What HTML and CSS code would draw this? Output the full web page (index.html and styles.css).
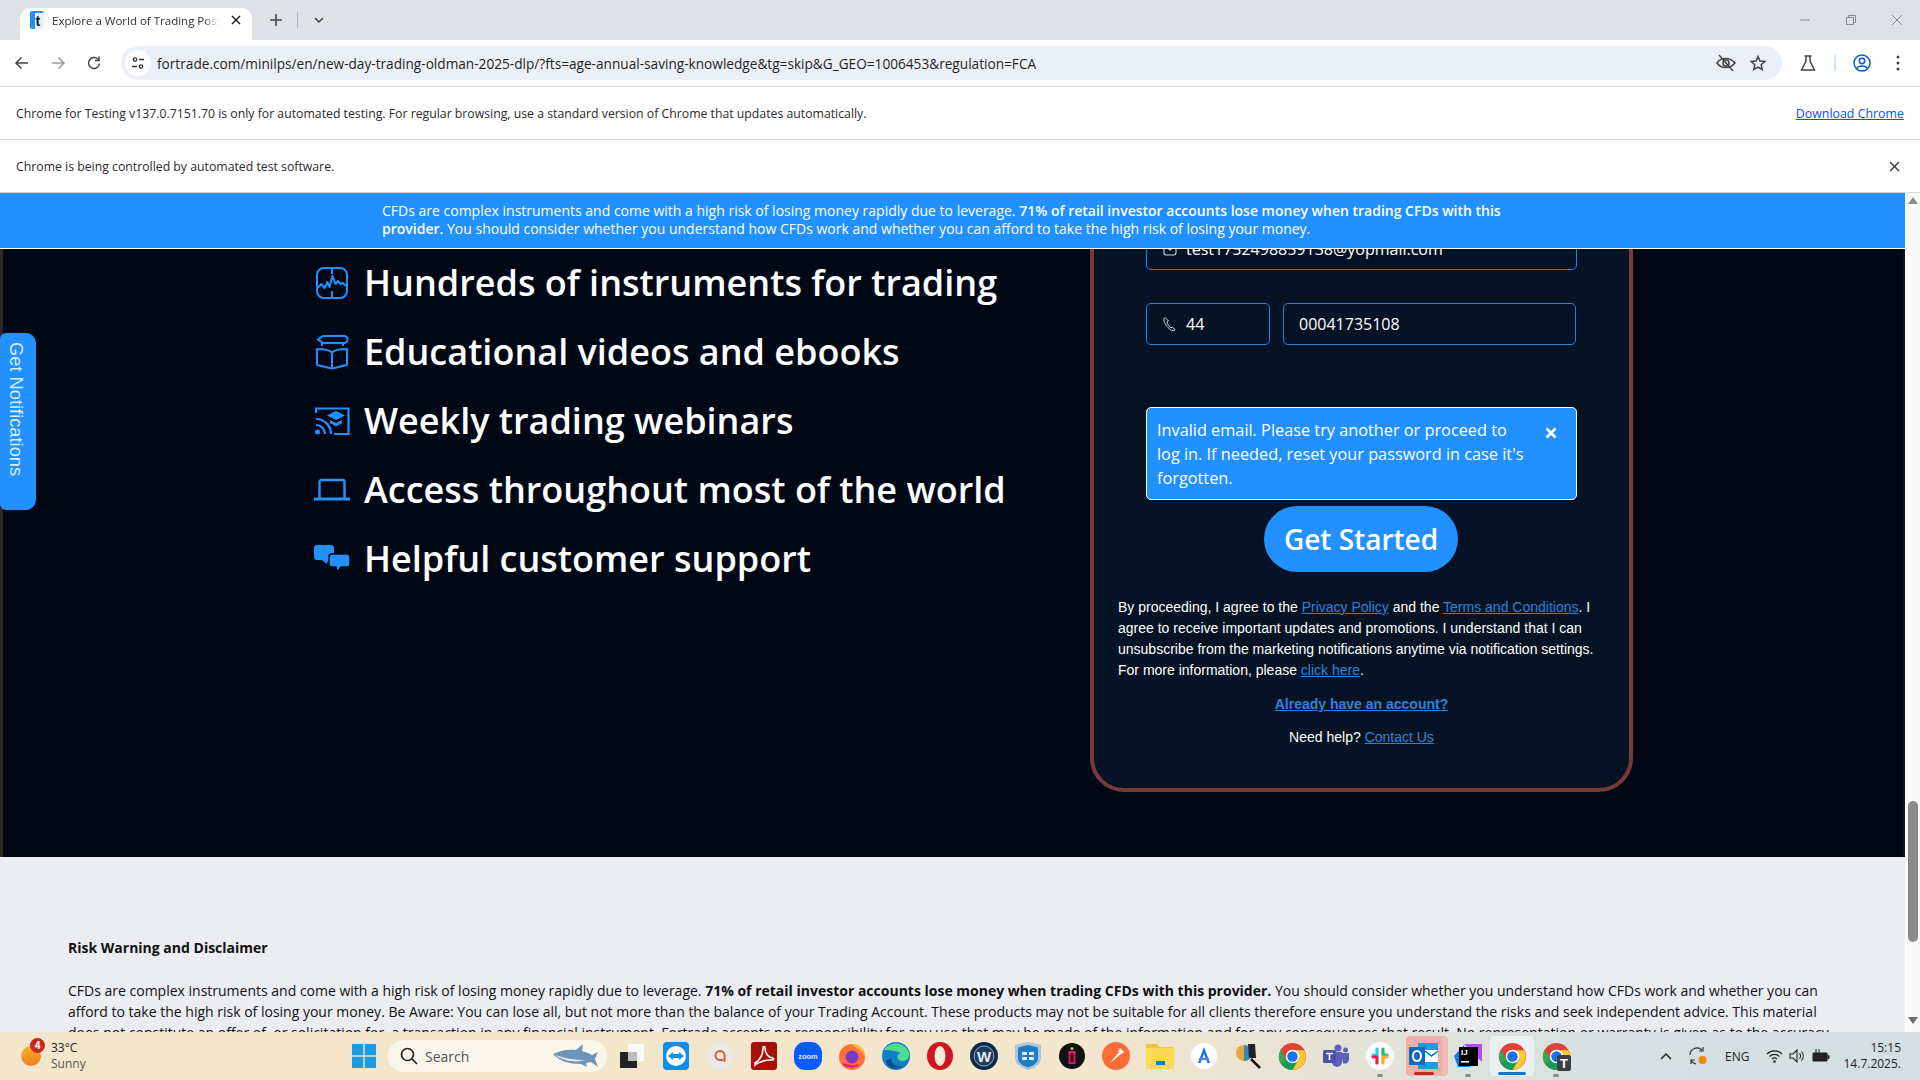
FILE: index.html
```html
<!DOCTYPE html>
<html lang="en">
<head>
  <meta charset="UTF-8">
  <title>Explore a World of Trading Possibilities</title>
  <link rel="stylesheet" href="styles.css">
</head>
<body>
  <svg class="defs" width="0" height="0">
    <symbol id="chrome" viewBox="0 0 32 32">
      <circle cx="16" cy="16" r="15" fill="#db4437"/>
      <path d="M16 16 3 23.5A15 15 0 0 0 16 31l7-7.5z" fill="#0f9d58"/>
      <path d="M16 9h13a15 15 0 0 1-13 22l7.500-13z" fill="#fcc934"/>
      <path d="M16 16 3 23.500A15 15 0 0 1 3 8.500L9.500 20z" fill="#34a853"/>
      <circle cx="16" cy="16" r="7.500" fill="#fff"/>
      <circle cx="16" cy="16" r="5.800" fill="#1a73e8"/>
    </symbol>
  </svg>

  <div class="tabstrip">
    <div class="tab">
      <svg class="favicon" width="14" height="18" viewBox="0 0 14 18"><rect width="14" height="18" rx="2" fill="#2291ff"/><rect x="5" y="2" width="9" height="16" fill="#e8f2ff"/><text x="5.500" y="15" class="favicon-t">t</text></svg>
      <span class="tab-title">Explore a World of Trading Possibilities</span>
      <svg class="tab-close" width="10" height="10" viewBox="0 0 10 10"><path d="M1 1l8 8M9 1L1 9" stroke="#222" stroke-width="1.500"/></svg>
    </div>
    <svg class="new-tab" width="12" height="12" viewBox="0 0 12 12"><path d="M6 0v12M0 6h12" stroke="#444" stroke-width="1.500"/></svg>
    <span class="strip-sep"></span>
    <svg class="tab-search" width="10" height="6" viewBox="0 0 10 6"><path d="M1 1l4 4 4-4" fill="none" stroke="#444" stroke-width="1.500"/></svg>
    <div class="window-btns">
      <svg width="12" height="12" viewBox="0 0 12 12"><path d="M1 6h10" stroke="#a3a6ab" stroke-width="1.500"/></svg>
      <svg width="12" height="12" viewBox="0 0 12 12"><path d="M1.500 3.500h7v7h-7zM3.500 3V1.500h7v7H9" fill="none" stroke="#85888c"/></svg>
      <svg width="12" height="12" viewBox="0 0 12 12"><path d="M1 1l10 10M11 1L1 11" stroke="#85888c"/></svg>
    </div>
  </div>

  <div class="toolbar">
    <svg class="nav-icon" width="16" height="16" viewBox="0 0 16 16"><path d="M14 8H2M7.500 2.500 2 8l5.500 5.500" fill="none" stroke="#444" stroke-width="1.500"/></svg>
    <svg class="nav-icon" width="16" height="16" viewBox="0 0 16 16"><path d="M2 8h12M8.500 2.500 14 8l-5.500 5.500" fill="none" stroke="#9a9a9a" stroke-width="1.500"/></svg>
    <svg class="nav-icon" width="16" height="16" viewBox="0 0 16 16"><path d="M13.500 8.500A5.500 5.500 0 1 1 12 4.200M13 1.500v4h-4" fill="none" stroke="#444" stroke-width="1.500"/></svg>
    <div class="omnibox">
      <span class="site-chip">
        <svg width="14" height="14" viewBox="0 0 14 14"><g fill="none" stroke="#333" stroke-width="1.300"><circle cx="4" cy="3.500" r="1.700"/><path d="M8 3.500h5M1 10.500h5"/><circle cx="10" cy="10.500" r="1.700"/></g></svg>
      </span>
      <span class="url">fortrade.com/minilps/en/new-day-trading-oldman-2025-dlp/?fts=age-annual-saving-knowledge&amp;tg=skip&amp;G_GEO=1006453&amp;regulation=FCA</span>
      <svg class="omni-eye" width="20" height="18" viewBox="0 0 20 18"><g fill="none" stroke="#444" stroke-width="1.500"><path d="M1 9c4-6 13-6 18 0-5 6-14 6-18 0z"/><circle cx="10" cy="9" r="3"/><path d="M3 1l14 16"/></g></svg>
      <svg class="omni-star" width="16" height="16" viewBox="0 0 16 16"><path d="M8 1.500l2 4.500 4.800.5-3.600 3.200 1 4.800L8 12.100l-4.200 2.400 1-4.800L1.200 6.500 6 6z" fill="none" stroke="#444" stroke-width="1.500"/></svg>
    </div>
    <svg class="tool-flask" width="16" height="16" viewBox="0 0 16 16"><path d="M4.500 1h7M6 1v5L1.500 15h13L10 6V1" fill="none" stroke="#444" stroke-width="1.500"/></svg>
    <span class="tool-sep"></span>
    <svg class="tool-profile" width="18" height="18" viewBox="0 0 18 18"><g fill="none" stroke="#0b57d0" stroke-width="1.500"><circle cx="9" cy="9" r="8"/><circle cx="9" cy="7" r="2.700"/><path d="M3.500 14.500c2-3.500 9-3.500 11 0"/></g></svg>
    <svg class="tool-menu" width="4" height="16" viewBox="0 0 4 16"><g fill="#444"><circle cx="2" cy="2" r="1.500"/><circle cx="2" cy="8" r="1.500"/><circle cx="2" cy="14" r="1.500"/></g></svg>
  </div>

  <div class="infobar">
    <span>Chrome for Testing v137.0.7151.70 is only for automated testing. For regular browsing, use a standard version of Chrome that updates automatically.</span>
    <a class="infobar-link" href="#">Download Chrome</a>
  </div>
  <div class="infobar">
    <span>Chrome is being controlled by automated test software.</span>
    <svg width="11" height="11" viewBox="0 0 11 11"><path d="M1 1l9 9M10 1l-9 9" stroke="#333" stroke-width="1.400"/></svg>
  </div>

  <div class="viewport">
    <div class="page">
      <div class="risk-banner">
        <p>CFDs are complex instruments and come with a high risk of losing money rapidly due to leverage. <b>71% of retail investor accounts lose money when trading CFDs with this provider.</b> You should consider whether you understand how CFDs work and whether you can afford to take the high risk of losing your money.</p>
      </div>

      <div class="page-scroll">
        <section class="hero">
          <a class="notify-tab" href="#">Get Notifications</a>
          <ul class="features">
            <li>
              <svg class="feature-icon" viewBox="0 0 36 36"><g fill="none" stroke="#2291ff" stroke-width="2"><rect x="3" y="3" width="30" height="30" rx="7"/><path d="M18 3v6M18 26v7"/><path d="M3.500 23l4-4 3 4 3-6 2 5 3-11 3 8 2.500-3 2.500 3 2.500-1 3 3" stroke-linejoin="round"/></g></svg>
              Hundreds of instruments for trading
            </li>
            <li>
              <svg class="feature-icon" viewBox="0 0 36 36"><g fill="none" stroke="#2291ff" stroke-width="2"><path d="M4 5.500 9 2h21a3.500 3.500 0 0 1 0 7H9zM8 9v3M29 9v3"/><path d="M3 15c6 0 12 .5 15 3.500 3-3 9-3.500 15-3.500v16l-15 3.500L3 31zM18 18.500v16" stroke-linejoin="round"/></g></svg>
              Educational videos and ebooks
            </li>
            <li>
              <svg class="feature-icon feature-icon-wide" viewBox="0 0 36 30"><g fill="none" stroke="#2291ff" stroke-width="2.200"><path d="M2 7V2.500h32.500V28H20"/><path d="M2 13a15 15 0 0 1 15 15M2 19a9 9 0 0 1 9 9"/></g><circle cx="3.500" cy="26" r="2.500" fill="#2291ff"/><path d="M22 5l9 4.500-9 4.500-9-4.500z" fill="#2291ff"/><path d="M16 14v3l6 3.500 6-3.500v-3l-6 3z" fill="#2291ff"/></svg>
              Weekly trading webinars
            </li>
            <li>
              <svg class="feature-icon feature-icon-wide" viewBox="0 0 36 30"><path d="M5.500 23V7a2 2 0 0 1 2-2h21a2 2 0 0 1 2 2v16" fill="none" stroke="#2291ff" stroke-width="2.400"/><rect y="22.500" width="36" height="3" fill="#2291ff"/></svg>
              Access throughout most of the world
            </li>
            <li>
              <svg class="feature-icon feature-icon-wide" viewBox="0 0 36 30"><path d="M3 1h14a3 3 0 0 1 3 3v9a3 3 0 0 1-3 3h-3l-1 4-5-4H3a3 3 0 0 1-3-3V4a3 3 0 0 1 3-3z" fill="#2291ff"/><path d="M18 10h15a3 3 0 0 1 3 3v7a3 3 0 0 1-3 3h-6l-4 5-1-5h-4a3 3 0 0 1-3-3v-7a3 3 0 0 1 3-3z" fill="#2291ff" stroke="#000816" stroke-width="1.500"/></svg>
              Helpful customer support
            </li>
          </ul>

          <div class="form-card">
            <div class="form-fields">
              <div class="field">
                <svg class="field-icon" width="16" height="16" viewBox="0 0 16 16"><g fill="none" stroke="#cfd3d8" stroke-width="1.100"><rect x="2" y="3" width="12" height="11" rx="2.500"/><path d="M2.500 5L8 9l5.500-4"/></g></svg>
                <span>test1752498859138@yopmail.com</span>
              </div>
              <div class="phone-row">
                <div class="field field-code">
                  <svg class="field-icon" width="16" height="16" viewBox="0 0 16 16"><path d="M3 1.500C1 3 2 7 5 10.500s6 5 8 3.500l-2.500-3-1.500.8C7.500 11 5 8 5 6l1.500-1z" fill="none" stroke="#cfd3d8"/></svg>
                  <span>44</span>
                </div>
                <div class="field field-phone">
                  <span>00041735108</span>
                </div>
              </div>
            </div>

            <div class="form-alert">
              <span class="alert-text">Invalid email. Please try another or proceed to log in. If needed, reset your password in case it's forgotten.</span>
              <svg class="alert-close" width="12" height="12" viewBox="0 0 12 12"><path d="M1.500 1.500l9 9M10.500 1.500l-9 9" stroke="#fff" stroke-width="2.600"/></svg>
            </div>

            <button class="get-started">Get Started</button>

            <p class="legal">By proceeding, I agree to the <a href="#">Privacy Policy</a> and the <a href="#">Terms and Conditions</a>. I agree to receive important updates and promotions. I understand that I can unsubscribe from the marketing notifications anytime via notification settings. For more information, please <a href="#">click here</a>.</p>
            <p class="login-line"><a href="#">Already have an account?</a></p>
            <p class="help-line">Need help? <a href="#">Contact Us</a></p>
          </div>
        </section>

        <section class="disclaimer">
          <h4>Risk Warning and Disclaimer</h4>
          <p>CFDs are complex instruments and come with a high risk of losing money rapidly due to leverage. <b>71% of retail investor accounts lose money when trading CFDs with this provider.</b> You should consider whether you understand how CFDs work and whether you can afford to take the high risk of losing your money. Be Aware: You can lose all, but not more than the balance of your Trading Account. These products may not be suitable for all clients therefore ensure you understand the risks and seek independent advice. This material does not constitute an offer of, or solicitation for, a transaction in any financial instrument. Fortrade accepts no responsibility for any use that may be made of the information and for any consequences that result. No representation or warranty is given as to the accuracy</p>
        </section>
      </div>
    </div>

    <div class="scrollbar">
      <svg width="10" height="7" viewBox="0 0 10 7"><path d="M5 0l5 7H0z" fill="#8c8c8c"/></svg>
      <span class="scroll-thumb"></span>
      <svg width="10" height="7" viewBox="0 0 10 7"><path d="M5 7l5-7H0z" fill="#6d6d6d"/></svg>
    </div>
  </div>

  <footer class="taskbar">
    <div class="weather">
      <span class="weather-sun"><span class="weather-badge">4</span></span>
      <div class="weather-text"><span>33°C</span><span class="weather-sub">Sunny</span></div>
    </div>
    <div class="task-btn">
      <svg width="24" height="24" viewBox="0 0 24 24"><g fill="#1c9be6"><rect width="11.300" height="11.300"/><rect x="12.700" width="11.300" height="11.300"/><rect y="12.700" width="11.300" height="11.300"/><rect x="12.700" y="12.700" width="11.300" height="11.300"/></g></svg>
    </div>
    <div class="task-search">
      <svg width="18" height="18" viewBox="0 0 18 18"><g fill="none" stroke="#222" stroke-width="1.700"><circle cx="7.500" cy="7.500" r="6"/><path d="M12 12l5 5"/></g></svg>
      <span>Search</span>
      <svg class="search-shark" width="46" height="26" viewBox="0 0 46 26"><path d="M0 11c8-4 16-5 23-4l7-6-1 7c4 1 8 3 10 4l6-3-3 7 3 8-7-5-5 1 1 4-6-3C16 21 6 18 0 11z" fill="#6d95b5"/><path d="M2 12c8 3 20 5 30 5-8 3-22 1-30-5z" fill="#e8eef2"/></svg>
    </div>
    <div class="task-btn">
      <svg width="26" height="26" viewBox="0 0 26 26"><rect x="9" y="1" width="16" height="17" fill="#fbfbfb"/><rect x="1" y="9" width="17" height="16" fill="#222"/><rect x="9" y="9" width="9" height="9" fill="#bdbdbd"/></svg>
    </div>
    <div class="task-btn">
      <svg width="26" height="28" viewBox="0 0 26 28"><rect width="26" height="28" rx="4" fill="#0e8ee9"/><circle cx="13" cy="14" r="10" fill="#fff"/><path d="M5 14l5-4v2h6v-2l5 4-5 4v-2h-6v2z" fill="#0e8ee9"/></svg>
    </div>
    <div class="task-btn">
      <svg width="28" height="28" viewBox="0 0 28 28"><circle cx="14" cy="14" r="14" fill="#ece8e2"/><path d="M18.500 20v-7a4.500 4.500 0 1 0-4.500 5h3" fill="none" stroke="#e05a44" stroke-width="2"/></svg>
    </div>
    <div class="task-btn">
      <svg width="26" height="28" viewBox="0 0 26 28"><rect width="26" height="28" rx="3" fill="#a80f07"/><path d="M4 21c5-3 8-9 8-15 0-2 2-2 2 0 0 6 4 10 8 10 1 0 1 2-1 2-6 0-12 1-17 5z" fill="none" stroke="#fff" stroke-width="1.600"/></svg>
    </div>
    <div class="task-btn">
      <svg width="28" height="28" viewBox="0 0 28 28"><rect width="28" height="28" rx="11" fill="#0b5cff"/><text x="14" y="16.500" class="zoom-label">zoom</text></svg>
    </div>
    <div class="task-btn">
      <svg width="28" height="28" viewBox="0 0 28 28"><circle cx="14" cy="15" r="13" fill="#ff7139"/><path d="M14 2c8 0 13 6 13 13-2-5-5-8-9-9z" fill="#ffbd2e"/><circle cx="14" cy="15" r="6.500" fill="#7b3ac2"/><path d="M4 21c3 5 13 7 18 1-5 2-12 1-18-1z" fill="#e31587"/></svg>
    </div>
    <div class="task-btn">
      <svg width="28" height="28" viewBox="0 0 28 28"><circle cx="14" cy="14" r="14" fill="#0f7fc9"/><path d="M2 8c5-8 20-10 25 3 1 5-2 8-7 8-6 0-6-7-1-8-7-3-13-3-17-3z" fill="#4fdc8b"/><path d="M9 16c0 6 6 9 11 8-6 5-14 3-16-5z" fill="#0a4f8c"/></svg>
    </div>
    <div class="task-btn">
      <svg width="26" height="28" viewBox="0 0 26 28"><ellipse cx="13" cy="14" rx="13" ry="14" fill="#d6121f"/><ellipse cx="13" cy="14" rx="5.500" ry="10" fill="#f5ebd6"/></svg>
    </div>
    <div class="task-btn">
      <svg width="28" height="28" viewBox="0 0 28 28"><circle cx="14" cy="14" r="14" fill="#102a4a"/><circle cx="14" cy="14" r="10" fill="#1d3c60" stroke="#8fa7bd"/><text x="14" y="19.500" class="win-label">W</text></svg>
    </div>
    <div class="task-btn">
      <svg width="26" height="28" viewBox="0 0 26 28"><path d="M13 0l13 3v13c0 6-6 10-13 12C6 26 0 22 0 16V3z" fill="#a9c6da"/><path d="M13 3l10 2.500V16c0 5-5 8-10 9.500C8 24 3 21 3 16V5.500z" fill="#1f7cc7"/><g fill="#dff0fb"><rect x="7" y="10" width="5" height="3"/><rect x="14" y="10" width="5" height="3"/><rect x="7" y="15" width="5" height="3"/><rect x="14" y="15" width="5" height="3"/></g></svg>
    </div>
    <div class="task-btn">
      <svg width="26" height="26" viewBox="0 0 26 26"><circle cx="13" cy="13" r="13" fill="#111"/><rect x="10.500" y="9" width="5" height="11" fill="none" stroke="#e5176d" stroke-width="2"/><circle cx="13" cy="5.500" r="1.500" fill="#d9b04b"/></svg>
    </div>
    <div class="task-btn">
      <svg width="28" height="28" viewBox="0 0 28 28"><circle cx="14" cy="14" r="14" fill="#ff6c37"/><path d="M8 21l9-11 2 2z" fill="#fff"/><path d="M18 6l4 4-3 2-3-3z" fill="#fff"/></svg>
    </div>
    <div class="task-btn">
      <svg width="28" height="26" viewBox="0 0 28 26"><path d="M0 1h11l2 3h15v22H0z" fill="#f2c53d"/><rect y="5" width="28" height="21" fill="#fcd957"/><rect x="10" y="18" width="9" height="4" fill="#0c80d0"/></svg>
    </div>
    <div class="task-btn">
      <svg width="26" height="26" viewBox="0 0 26 26"><circle cx="13" cy="13" r="13" fill="#fff"/><path d="M13 4l6 16h-2.500l-3.500-9-3.500 9H7z" fill="#1a73e8"/><path d="M8 15h10v2H8z" fill="#4285f4"/></svg>
    </div>
    <div class="task-btn">
      <svg width="28" height="28" viewBox="0 0 28 28"><circle cx="10" cy="11" r="8" fill="#e7a83c"/><path d="M10 3a8 8 0 0 1 0 16z" fill="#2d87c9"/><path d="M14 2h7l1 14h-7z" fill="#222"/><path d="M17 17l9 9" stroke="#111" stroke-width="2.500"/></svg>
    </div>
    <div class="task-btn"><svg width="29" height="29"><use href="#chrome"/></svg></div>
    <div class="task-btn">
      <svg width="26" height="24" viewBox="0 0 26 24"><g fill="#5d60b8"><circle cx="15" cy="4" r="3.500"/><circle cx="22.500" cy="6" r="2.500"/><path d="M18 9h8v7a4 4 0 0 1-6 3z"/><path d="M9 8h10v10a5 5 0 0 1-10 0z"/></g><rect y="6" width="13" height="13" rx="1.500" fill="#4b4fa8"/><path d="M3 9.500h7M6.500 9.500V16" stroke="#fff" stroke-width="1.700"/></svg>
    </div>
    <div class="task-btn task-btn-dot">
      <svg width="28" height="28" viewBox="0 0 28 28"><circle cx="14" cy="14" r="14" fill="#fafafa"/><g stroke-width="3.200" stroke-linecap="round"><path d="M11 7v6M7 13h4" stroke="#36c5f0"/><path d="M17 7v6M21 13h-4" stroke="#2eb67d"/><path d="M11 21v-6M7 15h4" stroke="#e01e5a"/><path d="M17 21v-6M21 15h-4" stroke="#ecb22e"/></g></svg>
    </div>
    <div class="task-btn task-btn-outlook">
      <svg width="30" height="28" viewBox="0 0 30 28"><rect x="9" y="1" width="20" height="26" fill="#1b9de2"/><rect x="16" y="8" width="13" height="12" fill="#fff"/><path d="M16 9l6.500 5L29 9" fill="none" stroke="#0a6cbd" stroke-width="1.400"/><rect y="5" width="16" height="18" fill="#0a6cbd"/><ellipse cx="8" cy="14" rx="4" ry="5" fill="none" stroke="#fff" stroke-width="2"/></svg>
      <span class="task-mark task-mark-red"></span>
    </div>
    <div class="task-btn task-btn-dot">
      <svg width="28" height="28" viewBox="0 0 28 28"><path d="M10 2h18v18z" fill="#b74af7"/><path d="M0 14L10 3l6 22H4z" fill="#087cfa"/><rect x="5" y="5" width="19" height="19" fill="#000"/><text x="7" y="13" class="ij-label">IJ</text><rect x="7" y="19" width="8" height="1.600" fill="#fff"/></svg>
    </div>
    <div class="task-btn task-btn-active">
      <svg width="29" height="29"><use href="#chrome"/></svg>
      <span class="task-mark task-mark-blue"></span>
    </div>
    <div class="task-btn task-btn-dot">
      <svg width="29" height="29"><use href="#chrome"/><rect x="15" y="13" width="14" height="16" rx="2" fill="#3c4043"/><text x="22" y="26" class="t-label">T</text></svg>
    </div>

    <div class="tray">
      <svg class="tray-chevron" width="12" height="8" viewBox="0 0 12 8"><path d="M1 7l5-5 5 5" fill="none" stroke="#222" stroke-width="1.500"/></svg>
      <svg class="tray-sync" width="20" height="20" viewBox="0 0 20 20"><g fill="none" stroke="#333" stroke-width="1.200"><path d="M2 9a7 7 0 0 1 12-5"/><path d="M15 1v4h-4"/><path d="M3 18v-4h4"/><path d="M3 14a7 7 0 0 0 5 4"/></g><circle cx="14.500" cy="14" r="4" fill="#f08a0c"/></svg>
      <span class="tray-lang">ENG</span>
      <svg class="tray-wifi" width="17" height="14" viewBox="0 0 17 14"><g fill="none" stroke="#222" stroke-width="1.200"><path d="M1 5a10.500 10.500 0 0 1 15 0M3.500 7.500a7 7 0 0 1 10 0M6 10a3.500 3.500 0 0 1 5 0"/></g><circle cx="8.500" cy="12.500" r="1.200" fill="#222"/></svg>
      <svg class="tray-sound" width="17" height="14" viewBox="0 0 17 14"><g fill="none" stroke="#222" stroke-width="1.100"><path d="M1 5v4h3l4 4V1L4 5z"/><path d="M10.500 4.500a3.500 3.500 0 0 1 0 5M12.500 2.500a7 7 0 0 1 0 9"/></g></svg>
      <svg class="tray-battery" width="18" height="14" viewBox="0 0 18 14"><path d="M1 4h14v8H1zM15.500 6.500H17v3h-1.500" fill="#222" stroke="#222"/><path d="M4 0v4M7 0v4" stroke="#222"/></svg>
      <div class="tray-clock"><span>15:15</span><span>14.7.2025.</span></div>
    </div>
  </footer>
</body>
</html>
```

FILE: styles.css
```css
:root {
  --blue: #2291ff;
  --page-dark: #000816;
  --card: #061325;
  --card-border: #763a3a;
  --link: #2a85d9;
}

* {
  box-sizing: border-box;
  margin: 0;
  padding: 0;
}

body {
  width: 1920px;
  height: 1080px;
  overflow: hidden;
  display: flex;
  flex-direction: column;
  background: #fff;
  font-family: "Open Sans", "Noto Sans", sans-serif;
  color: #222;
}

.defs {
  position: absolute;
}

/* browser chrome */
.tabstrip {
  height: 40px;
  flex: none;
  display: flex;
  align-items: center;
  background: #dee1e6;
  padding-left: 20px;
}

.tab {
  width: 232px;
  height: 32px;
  margin-top: 8px;
  padding: 0 10px 8px;
  display: flex;
  align-items: center;
  background: #fff;
  border-radius: 10px 10px 0 0;
}

.favicon-t {
  font: 700 14px "Liberation Sans", sans-serif;
  fill: #111;
}

.tab-title {
  width: 168px;
  margin-left: 8px;
  font-size: 11.500px;
  white-space: nowrap;
  overflow: hidden;
  color: #333;
  -webkit-mask-image: linear-gradient(90deg, #000 90%, transparent);
}

.tab-close {
  margin-left: 11px;
}

.new-tab {
  margin-left: 18px;
}

.strip-sep {
  width: 1px;
  height: 16px;
  margin-left: 15px;
  background: #b4b7bc;
}

.tab-search {
  margin-left: 16px;
}

.window-btns {
  margin-left: auto;
  width: 121px;
  padding-right: 17px;
  display: flex;
  justify-content: space-between;
}

.toolbar {
  height: 47px;
  flex: none;
  display: flex;
  align-items: center;
  padding-left: 14px;
  border-bottom: 1px solid #dcdcdc;
  border-radius: 8px 8px 0 0;
  background: #fff;
}

.nav-icon {
  margin-right: 20px;
}

.omnibox {
  width: 1661px;
  height: 34px;
  margin-left: -1px;
  flex: none;
  display: flex;
  align-items: center;
  padding-left: 4px;
  border-radius: 17px;
  background: #ebf0f8;
}

.site-chip {
  width: 26px;
  height: 26px;
  flex: none;
  display: flex;
  align-items: center;
  justify-content: center;
  border-radius: 50%;
  background: #fff;
}

.url {
  margin-left: 6px;
  font-size: 13.650px;
  white-space: nowrap;
  color: #1f1f1f;
}

.omni-eye {
  margin-left: auto;
}

.omni-star {
  margin: 0 16px 0 14px;
}

.tool-flask {
  margin-left: 18px;
}

.tool-sep {
  width: 2px;
  height: 16px;
  margin-left: 18px;
  background: #d3e3fd;
}

.tool-profile {
  margin-left: 17px;
}

.tool-menu {
  margin-left: 25px;
}

.infobar {
  height: 53px;
  flex: none;
  display: flex;
  align-items: center;
  justify-content: space-between;
  padding: 0 20px 0 16px;
  border-bottom: 1px solid #d6d6d6;
  font-size: 12.270px;
  color: #2b2b2b;
}

.infobar-link {
  margin-right: -4px;
  font-size: 12.400px;
  color: #0b57d0;
}

/* page viewport */
.viewport {
  flex: 1;
  min-height: 0;
  display: flex;
}

.page {
  width: 1905px;
  flex: none;
  display: flex;
  flex-direction: column;
}

.scrollbar {
  width: 15px;
  flex: none;
  display: flex;
  flex-direction: column;
  align-items: center;
  padding: 4px 0 8px;
  background: #fafafa;
}

.scroll-thumb {
  width: 10px;
  height: 141px;
  margin: auto 0 75px;
  border-radius: 5px;
  background: #8a8a8a;
}

.risk-banner {
  height: 56px;
  flex: none;
  padding: 9px 0 0 382px;
  border-bottom: 1px solid #fff;
  background: var(--blue);
  color: #fff;
  font-size: 14px;
  line-height: 18px;
}

.risk-banner p {
  width: 1150px;
}

.risk-banner b {
  font-weight: 600;
}

.page-scroll {
  flex: 1;
  min-height: 0;
  overflow: hidden;
}

.hero {
  position: relative;
  height: 608px;
  display: flex;
  justify-content: space-between;
  padding: 0 270px 0 311px;
  border-left: 3px solid #2a2a2a;
  border-right: 2px solid #141414;
  background: var(--page-dark);
}

.notify-tab {
  position: absolute;
  left: -3px;
  top: 84px;
  width: 36px;
  height: 177px;
  padding-top: 9px;
  border-radius: 6px 10px 10px 6px;
  background: var(--blue);
  writing-mode: vertical-rl;
  font: 18.300px/40px "Liberation Sans", sans-serif;
  color: #d8ecff;
  text-decoration: none;
}

.features {
  list-style: none;
  margin-top: -1px;
}

.features li {
  height: 69px;
  display: flex;
  align-items: center;
  gap: 14px;
  font-size: 36px;
  font-weight: 600;
  color: #fff;
  white-space: nowrap;
}

.feature-icon {
  width: 36px;
  height: 36px;
  flex: none;
}

.feature-icon-wide {
  height: 30px;
}

.form-card {
  width: 543px;
  height: 573px;
  margin-top: -30px;
  flex: none;
  padding: 5px 24px 0;
  border: 4px solid var(--card-border);
  border-radius: 34px;
  background: var(--card);
  color: #fff;
}

.form-fields {
  padding: 0 0 0 28px;
}

.field {
  width: 431px;
  height: 42px;
  display: flex;
  align-items: center;
  padding-left: 15px;
  border: 1px solid #2a85d9;
  border-radius: 5px;
  font-size: 16px;
}

.field-icon {
  margin-right: 8px;
}

.phone-row {
  display: flex;
  gap: 13px;
  margin-top: 33px;
}

.field-code {
  width: 124px;
}

.field-phone {
  width: 293px;
}

.form-alert {
  width: 431px;
  height: 93px;
  margin: 62px 0 0 28px;
  display: flex;
  align-items: flex-start;
  justify-content: space-between;
  padding: 10px 19px 0 10px;
  border: 1px solid #fff;
  border-radius: 5px;
  background: var(--blue);
  font-size: 16.300px;
  line-height: 24px;
  font-weight: 500;
}

.alert-text {
  width: 372px;
  flex: none;
}

.alert-close {
  flex: none;
  margin-top: 9px;
}

.get-started {
  display: block;
  width: 194px;
  height: 66px;
  margin: 6px auto 0 146px;
  border: 0;
  border-radius: 33px;
  background: var(--blue);
  color: #fff;
  font-family: "Open Sans", sans-serif;
  font-size: 28px;
  font-weight: 600;
}

.legal,
.login-line,
.help-line {
  font-family: "Liberation Sans", Arial, sans-serif;
  font-size: 14px;
  line-height: 21px;
}

.legal {
  margin-top: 25px;
}

.form-card a {
  color: var(--link);
}

.login-line {
  margin-top: 13px;
  text-align: center;
  font-weight: 700;
}

.help-line {
  margin-top: 12px;
  text-align: center;
}

.disclaimer {
  height: 175px;
  padding: 80px 0 0 68px;
  background: #ebedf1;
  color: #111;
  font-size: 14px;
  line-height: 21px;
}

.disclaimer h4 {
  font-size: 14px;
  font-weight: 700;
}

.disclaimer p {
  width: 1770px;
  margin-top: 22px;
}

/* windows taskbar */
.taskbar {
  height: 48px;
  flex: none;
  display: flex;
  align-items: center;
  background: linear-gradient(90deg, #f3e6cc 0%, #f3e6cc 55%, #d6e0e2 85%, #d5dfe2 100%);
}

.task-btn {
  position: relative;
  width: 44px;
  height: 40px;
  flex: none;
  display: flex;
  align-items: center;
  justify-content: center;
  border-radius: 4px;
}

.task-btn-active {
  background: #eceff0;
}

.task-btn-outlook {
  background: #ecb0a8;
  box-shadow: 6px 0 0 #ecbcb2;
  width: 36px;
  margin: 0 4px;
}

.task-btn-dot::after {
  content: "";
  position: absolute;
  left: 19px;
  bottom: -1px;
  width: 6px;
  height: 3px;
  border-radius: 2px;
  background: #8a8a8a;
}

.task-mark {
  position: absolute;
  bottom: 1px;
  left: 8px;
  right: 8px;
  height: 3px;
  border-radius: 2px;
}

.task-mark-red {
  background: #c4281c;
}

.task-mark-blue {
  background: #0a78d4;
}

.zoom-label {
  font: 700 7.500px "Liberation Sans", sans-serif;
  fill: #dce8ff;
  text-anchor: middle;
}

.win-label {
  font: 700 15px "Liberation Sans", sans-serif;
  fill: #e8eef4;
  text-anchor: middle;
}

.ij-label {
  font: 700 8px "Liberation Sans", sans-serif;
  fill: #fff;
}

.t-label {
  font: 700 13px "Liberation Sans", sans-serif;
  fill: #fff;
  text-anchor: middle;
}

.weather {
  width: 342px;
  flex: none;
  display: flex;
  align-items: center;
  padding-left: 21px;
}

.weather-sun {
  position: relative;
  width: 20px;
  height: 20px;
  border-radius: 50%;
  background: linear-gradient(160deg, #f7b733, #f0761a);
}

.weather-badge {
  position: absolute;
  left: 9px;
  top: -8px;
  width: 15px;
  height: 15px;
  border-radius: 50%;
  background: #c42b1c;
  color: #fff;
  font-size: 10px;
  font-weight: 700;
  line-height: 15px;
  text-align: center;
}

.weather-text {
  margin-left: 10px;
  display: flex;
  flex-direction: column;
  font-size: 12px;
  line-height: 16px;
  color: #222;
}

.weather-sub {
  color: #555;
}

.task-search {
  width: 219px;
  height: 32px;
  margin: 0 3px 0 2px;
  flex: none;
  display: flex;
  align-items: center;
  padding-left: 12px;
  border-radius: 16px;
  background: #fbf6ea;
  font-size: 14px;
  color: #555;
}

.task-search span {
  margin-left: 7px;
}

.search-shark {
  margin-left: auto;
  margin-right: 8px;
}

.tray {
  margin-left: auto;
  display: flex;
  align-items: center;
  padding-right: 19px;
}

.tray-chevron {
  margin-right: 16px;
}

.tray-sync {
  margin-right: 17px;
}

.tray-lang {
  margin-right: 16px;
  font-size: 12px;
  color: #222;
}

.tray-sound {
  margin-left: 6.500px;
}

.tray-battery {
  margin-left: 5.500px;
}

.tray-clock {
  margin-left: 14px;
  display: flex;
  flex-direction: column;
  align-items: flex-end;
  font-size: 12px;
  line-height: 16px;
  color: #222;
}
```
